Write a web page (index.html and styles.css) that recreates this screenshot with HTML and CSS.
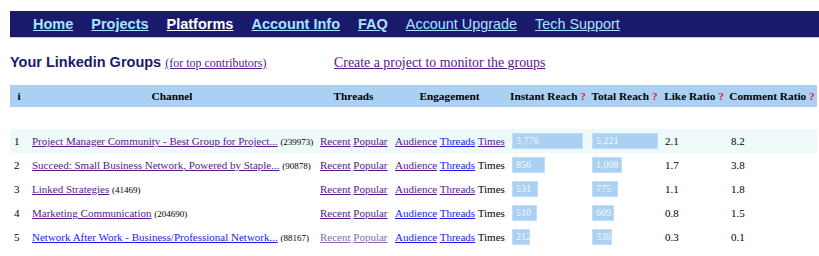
FILE: index.html
```html
<!DOCTYPE html>
<html lang="en">
<head>
    <meta charset="UTF-8">
    <title>Your Linkedin Groups</title>
    <link rel="stylesheet" href="styles.css">
</head>
<body>

<div class="nav">
    <a href="#" class="nav-link">Home</a>
    <a href="#" class="nav-link">Projects</a>
    <a href="#" class="nav-link current">Platforms</a>
    <a href="#" class="nav-link">Account Info</a>
    <a href="#" class="nav-link">FAQ</a>
    <a href="#" class="nav-link light">Account Upgrade</a>
    <a href="#" class="nav-link light">Tech Support</a>
</div>

<div class="title-row">
    <h2 class="title">Your Linkedin Groups <a href="#" class="small-link">(for top contributors)</a></h2>
    <a href="#" class="create-link">Create a project to monitor the groups</a>
</div>

<table class="groups">
    <colgroup>
        <col style="width:18px">
        <col style="width:288px">
        <col style="width:75px">
        <col style="width:117px">
        <col style="width:80px">
        <col style="width:73px">
        <col style="width:66px">
        <col style="width:90px">
    </colgroup>
    <thead>
        <tr>
            <th>i</th>
            <th>Channel</th>
            <th>Threads</th>
            <th>Engagement</th>
            <th>Instant Reach <span class="help">?</span></th>
            <th>Total Reach <span class="help">?</span></th>
            <th>Like Ratio <span class="help">?</span></th>
            <th>Comment Ratio <span class="help">?</span></th>
        </tr>
    </thead>
    <tbody>
        <tr class="spacer"><td colspan="8"></td></tr>
        <tr class="hl">
            <td>1</td>
            <td><a href="#">Project Manager Community - Best Group for Project...</a> <span class="count">(239973)</span></td>
            <td><a href="#">Recent</a> <a href="#">Popular</a></td>
            <td><a href="#">Audience</a> <a href="#" class="new">Threads</a> <a href="#">Times</a></td>
            <td><div class="bar" style="width:71px">3,776</div></td>
            <td><div class="bar" style="width:66px">5,221</div></td>
            <td>2.1</td>
            <td>8.2</td>
        </tr>
        <tr>
            <td>2</td>
            <td><a href="#">Succeed: Small Business Network, Powered by Staple...</a> <span class="count">(90878)</span></td>
            <td><a href="#">Recent</a> <a href="#">Popular</a></td>
            <td><a href="#">Audience</a> <a href="#" class="new">Threads</a> Times</td>
            <td><div class="bar" style="width:33px">856</div></td>
            <td><div class="bar" style="width:30px">1,008</div></td>
            <td>1.7</td>
            <td>3.8</td>
        </tr>
        <tr>
            <td>3</td>
            <td><a href="#">Linked Strategies</a> <span class="count">(41469)</span></td>
            <td><a href="#">Recent</a> <a href="#">Popular</a></td>
            <td><a href="#">Audience</a> <a href="#">Threads</a> Times</td>
            <td><div class="bar" style="width:26px">531</div></td>
            <td><div class="bar" style="width:26px">775</div></td>
            <td>1.1</td>
            <td>1.8</td>
        </tr>
        <tr>
            <td>4</td>
            <td><a href="#">Marketing Communication</a> <span class="count">(204690)</span></td>
            <td><a href="#">Recent</a> <a href="#">Popular</a></td>
            <td><a href="#" class="new">Audience</a> <a href="#" class="new">Threads</a> Times</td>
            <td><div class="bar" style="width:25px">510</div></td>
            <td><div class="bar" style="width:22px">609</div></td>
            <td>0.8</td>
            <td>1.5</td>
        </tr>
        <tr>
            <td>5</td>
            <td><a href="#" class="new">Network After Work - Business/Professional Network...</a> <span class="count">(88167)</span></td>
            <td><a href="#" class="faded">Recent</a> <a href="#" class="faded">Popular</a></td>
            <td><a href="#" class="new">Audience</a> <a href="#" class="new">Threads</a> Times</td>
            <td><div class="bar" style="width:18px">212</div></td>
            <td><div class="bar" style="width:20px">338</div></td>
            <td>0.3</td>
            <td>0.1</td>
        </tr>
    </tbody>
</table>

</body>
</html>
```

FILE: styles.css
```css
body {
    margin: 11px 0 0 10px;
    font-family: "Liberation Serif", "Times New Roman", serif;
    background-color: #fff;
    color: #000;
    overflow: hidden;
}
.nav {
    background-color: #1a1a6c;
    border-bottom: 1px solid #c8c8e8;
    height: 26px;
    display: flex;
    align-items: center;
    gap: 18px;
    padding-left: 23px;
    font-family: "Liberation Sans", Arial, sans-serif;
    font-size: 14.5px;
    font-weight: bold;
}
.nav-link {
    color: #a8e4ff;
    text-decoration: underline;
}
.nav-link.current {
    color: #fff;
}
.nav-link.light {
    font-weight: normal;
    font-size: 14.4px;
}
.title-row {
    display: flex;
    align-items: baseline;
    margin-top: 16px;
    height: 21px;
}
.title {
    margin: 0;
    font-family: "Liberation Sans", Arial, sans-serif;
    font-size: 14.5px;
    color: #1a1a6c;
    width: 324px;
}
.small-link {
    font-family: "Liberation Serif", "Times New Roman", serif;
    font-size: 12px;
    font-weight: normal;
    color: #551a8b;
}
.create-link {
    font-size: 13.9px;
    color: #551a8b;
}
.groups {
    margin-top: 10px;
    width: 807px;
    table-layout: fixed;
    border-collapse: collapse;
    font-size: 11px;
}
.groups th {
    background-color: #aad0f4;
    height: 22px;
    padding: 0;
    font-size: 11.3px;
    text-align: center;
    white-space: nowrap;
}
.help {
    color: #e02020;
}
.groups td {
    height: 24px;
    padding: 0 4px;
    white-space: nowrap;
}
.groups tr.spacer td {
    height: 22px;
}
.groups tr.hl td {
    background-color: #eefafa;
}
.groups a {
    color: #551a8b;
}
.groups a.new {
    color: #1a1aee;
}
.groups a.faded {
    color: #8a6ab0;
}
.count {
    font-size: 9px;
}
.bar {
    box-sizing: border-box;
    height: 16px;
    line-height: 14px;
    background-color: #aad0f4;
    border: 1px solid #c2ddf6;
    color: #f4f9ff;
    font-size: 10px;
    padding-left: 3px;
    overflow: hidden;
}
```
